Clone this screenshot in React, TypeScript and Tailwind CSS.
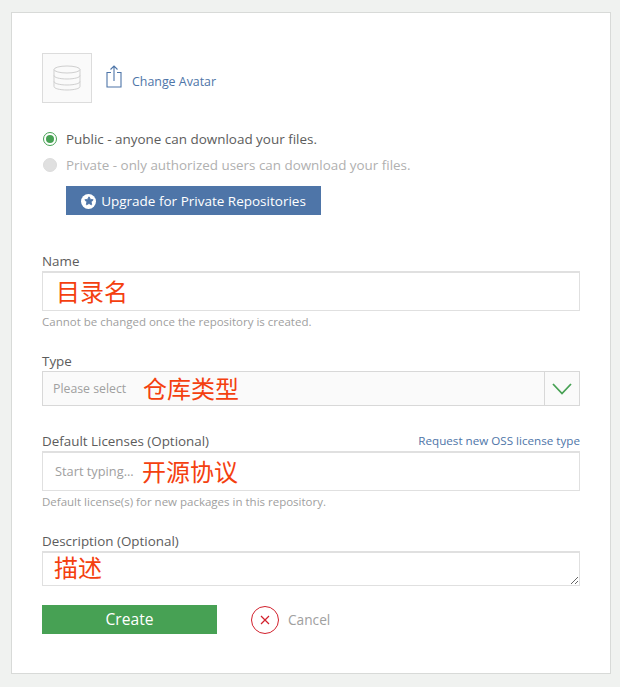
import { Star } from "lucide-react";

const sans = "font-['Open_Sans',sans-serif]";
const mark = "font-['Noto_Sans_CJK_SC',sans-serif] text-[#f4400f] text-[24px] leading-none mb-[2px]";

function DatabaseIcon() {
  return (
    <svg width="28" height="28" viewBox="0 0 28 28" fill="none" stroke="#cfcfcf" strokeWidth="1">
      <ellipse cx="14" cy="5.5" rx="13" ry="3.5" />
      <path d="M1 5.5v17c0 2 5.8 3.5 13 3.5s13-1.500 13-3.500v-17" />
      <path d="M1 11.500c0 2 5.800 3.500 13 3.500s13-1.500 13-3.500" />
      <path d="M1 17.500c0 2 5.800 3.500 13 3.500s13-1.500 13-3.500" />
    </svg>
  );
}

function ShareIcon() {
  return (
    <svg width="16" height="23" viewBox="0 0 16 23" fill="none" stroke="#4e75a8" strokeWidth="1.100">
      <path d="M5 7.500H1v14.500h14V7.500h-4" />
      <path d="M8 16V1M4.500 4.500L8 1l3.500 3.500" />
    </svg>
  );
}

function Field({ label, children, hint, aside }: { label: string; children: React.ReactNode; hint?: string; aside?: string }) {
  return (
    <div>
      <div className="flex items-end justify-between h-[20px]">
        <label className="text-[13.400px] leading-[20px] text-[#5c5c5c]">{label}</label>
        {aside && <a className="text-[11.650px] leading-[20px] text-[#4e75a8]">{aside}</a>}
      </div>
      {children}
      {hint && <p className="text-[11.500px] leading-[22px] text-[#a0a0a0]">{hint}</p>}
    </div>
  );
}

export default function App() {
  return (
    <div className={`${sans} h-[687px] bg-[#f0f2f0] pt-[12px] pl-[11px]`}>
      <div className="w-[600px] h-[662px] bg-white border border-[#d8dad8] pt-[40px] pl-[30px] pr-[30px]">
        <div className="flex items-center h-[50px]">
          <div className="w-[50px] h-[50px] border border-[#dcdcdc] bg-[#fafafa] flex items-center justify-center">
            <DatabaseIcon />
          </div>
          <div className="ml-[14px] mb-[3px]">
            <ShareIcon />
          </div>
          <a className="ml-[10px] mt-[8px] text-[12.400px] text-[#4e75a8]">Change Avatar</a>
        </div>

        <div className="mt-[23px] flex items-center h-[26px]">
          <span className="w-[14px] h-[14px] rounded-full border border-[#47a154] flex items-center justify-center ml-px">
            <span className="w-[8px] h-[8px] rounded-full bg-[#47a154]" />
          </span>
          <span className="ml-[9px] text-[13.450px] text-[#5c5c5c]">Public - anyone can download your files.</span>
        </div>
        <div className="flex items-center h-[26px]">
          <span className="w-[14px] h-[14px] rounded-full bg-[#e0e0e0] border border-[#dcdcdc] ml-px" />
          <span className="ml-[9px] text-[13.400px] text-[#b0b0b0]">Private - only authorized users can download your files.</span>
        </div>
        <button className="ml-[24px] mt-[8px] w-[255px] h-[29px] pt-px bg-[#4e75a8] text-white text-[13.500px] flex items-center justify-center gap-[5px]">
          <span className="w-[15px] h-[15px] rounded-full bg-white flex items-center justify-center">
            <Star size={10} fill="#4e75a8" stroke="#4e75a8" />
          </span>
          Upgrade for Private Repositories
        </button>

        <div className="mt-[36px]">
          <Field label="Name" hint="Cannot be changed once the repository is created.">
            <div className="h-[40px] border border-[#e0e0e0] border-t-2 flex items-center pl-[13px]">
              <span className={mark}>目录名</span>
            </div>
          </Field>
        </div>

        <div className="mt-[18px]">
          <Field label="Type">
            <div className="h-[35px] border border-[#d8d8d8] bg-[#fafafa] flex items-center">
              <span className="pl-[10px] pt-px text-[12.300px] text-[#a0a0a0] w-[100px]">Please select</span>
              <span className={mark}>仓库类型</span>
              <span className="ml-auto w-[35px] h-full border-l border-[#d8d8d8] flex items-center justify-center">
                <svg width="20" height="12" viewBox="0 0 20 12" fill="none" stroke="#47a154" strokeWidth="1.800">
                  <path d="M1 1l9 9.500L19 1" />
                </svg>
              </span>
            </div>
          </Field>
        </div>

        <div className="mt-[25px]">
          <Field label="Default Licenses (Optional)" aside="Request new OSS license type" hint="Default license(s) for new packages in this repository.">
            <div className="h-[40px] border border-[#e0e0e0] border-t-2 flex items-center pl-[12px]">
              <span className="text-[12.800px] text-[#a0a0a0] w-[87px]">Start typing...</span>
              <span className={mark}>开源协议</span>
            </div>
          </Field>
        </div>

        <div className="mt-[18px]">
          <Field label="Description (Optional)">
            <textarea
              defaultValue="描述"
              className="block w-full h-[35px] border border-[#e0e0e0] border-t-2 pl-[11px] font-['Noto_Sans_CJK_SC',sans-serif] text-[#f4400f] text-[24px] leading-[27px] outline-none overflow-hidden"
            />
          </Field>
        </div>

        <div className="mt-[19px] flex items-center">
          <button className="w-[175px] h-[29px] bg-[#47a154] text-white text-[15.600px]">Create</button>
          <span className="ml-[34px] w-[28px] h-[28px] rounded-full border border-[#d2202c] flex items-center justify-center">
            <svg width="10" height="10" viewBox="0 0 10 10" stroke="#d2202c" strokeWidth="1.200">
              <path d="M1 1l8 8M9 1l-8 8" />
            </svg>
          </span>
          <a className="ml-[9px] pt-px text-[13.700px] text-[#a0a0a0]">Cancel</a>
        </div>
      </div>
    </div>
  );
}
